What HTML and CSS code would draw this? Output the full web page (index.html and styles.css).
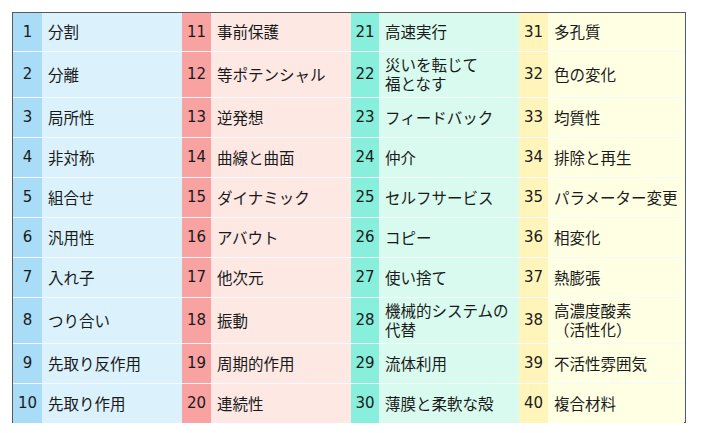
FILE: index.html
```
<!DOCTYPE html>
<html lang="ja">
<head>
<meta charset="utf-8">
<link rel="stylesheet" href="styles.css">
</head>
<body>
<div class="grid">
  <div class="n c1">1</div><div class="t c1">分割</div>
  <div class="n c2">11</div><div class="t c2">事前保護</div>
  <div class="n c3">21</div><div class="t c3">高速実行</div>
  <div class="n c4">31</div><div class="t c4">多孔質</div>

  <div class="n c1">2</div><div class="t c1">分離</div>
  <div class="n c2">12</div><div class="t c2">等ポテンシャル</div>
  <div class="n c3">22</div><div class="t c3"><span>災いを転じて<br>福となす</span></div>
  <div class="n c4">32</div><div class="t c4">色の変化</div>

  <div class="n c1">3</div><div class="t c1">局所性</div>
  <div class="n c2">13</div><div class="t c2">逆発想</div>
  <div class="n c3">23</div><div class="t c3">フィードバック</div>
  <div class="n c4">33</div><div class="t c4">均質性</div>

  <div class="n c1">4</div><div class="t c1">非対称</div>
  <div class="n c2">14</div><div class="t c2">曲線と曲面</div>
  <div class="n c3">24</div><div class="t c3">仲介</div>
  <div class="n c4">34</div><div class="t c4">排除と再生</div>

  <div class="n c1">5</div><div class="t c1">組合せ</div>
  <div class="n c2">15</div><div class="t c2">ダイナミック</div>
  <div class="n c3">25</div><div class="t c3">セルフサービス</div>
  <div class="n c4">35</div><div class="t c4">パラメーター変更</div>

  <div class="n c1">6</div><div class="t c1">汎用性</div>
  <div class="n c2">16</div><div class="t c2">アバウト</div>
  <div class="n c3">26</div><div class="t c3">コピー</div>
  <div class="n c4">36</div><div class="t c4">相変化</div>

  <div class="n c1">7</div><div class="t c1">入れ子</div>
  <div class="n c2">17</div><div class="t c2">他次元</div>
  <div class="n c3">27</div><div class="t c3">使い捨て</div>
  <div class="n c4">37</div><div class="t c4">熱膨張</div>

  <div class="n c1">8</div><div class="t c1">つり合い</div>
  <div class="n c2">18</div><div class="t c2">振動</div>
  <div class="n c3">28</div><div class="t c3"><span>機械的システムの<br>代替</span></div>
  <div class="n c4">38</div><div class="t c4"><span>高濃度酸素<br>（活性化）</span></div>

  <div class="n c1">9</div><div class="t c1">先取り反作用</div>
  <div class="n c2">19</div><div class="t c2">周期的作用</div>
  <div class="n c3">29</div><div class="t c3">流体利用</div>
  <div class="n c4">39</div><div class="t c4">不活性雰囲気</div>

  <div class="n c1">10</div><div class="t c1">先取り作用</div>
  <div class="n c2">20</div><div class="t c2">連続性</div>
  <div class="n c3">30</div><div class="t c3">薄膜と柔軟な殻</div>
  <div class="n c4">40</div><div class="t c4">複合材料</div>
</div>
</body>
</html>
```

FILE: styles.css
```
html, body {
  margin: 0;
  padding: 0;
  background: #ffffff;
}
body {
  padding: 12px 0 0 12px;
  font-family: "DejaVu Sans", "Noto Sans CJK JP", sans-serif;
  color: #1a1a1a;
}
.grid {
  box-sizing: border-box;
  width: 674px;
  height: 411px;
  border: 1.5px solid #5a5a5a;
  display: grid;
  grid-template-columns: 29px 140px 29px 140px 28px 140px 29px 136px;
  grid-template-rows: 38px 45px 39px 39px 39px 39px 39px 45px 39px 39px;
  row-gap: 1px;
  background: #f4fbff;
}
.n {
  display: flex;
  align-items: center;
  justify-content: center;
  font-size: 15px;
  padding-bottom: 1px;
}
.t {
  display: flex;
  align-items: center;
  padding-left: 6px;
  padding-bottom: 2px;
  font-size: 15.5px;
  line-height: 20px;
  font-family: "Noto Sans CJK JP", sans-serif;
  white-space: nowrap;
}
.t span {
  display: block;
  line-height: 19px;
}
.n.c1 { background: #a9dcf6; }
.t.c1 { background: #dbf2fd; }
.n.c2 { background: #f9a2a2; }
.t.c2 { background: #fde8e4; }
.n.c3 { background: #88efdc; }
.t.c3 { background: #d9faee; }
.n.c4 { background: #fff5bb; }
.t.c4 { background: #ffffe4; }
```
